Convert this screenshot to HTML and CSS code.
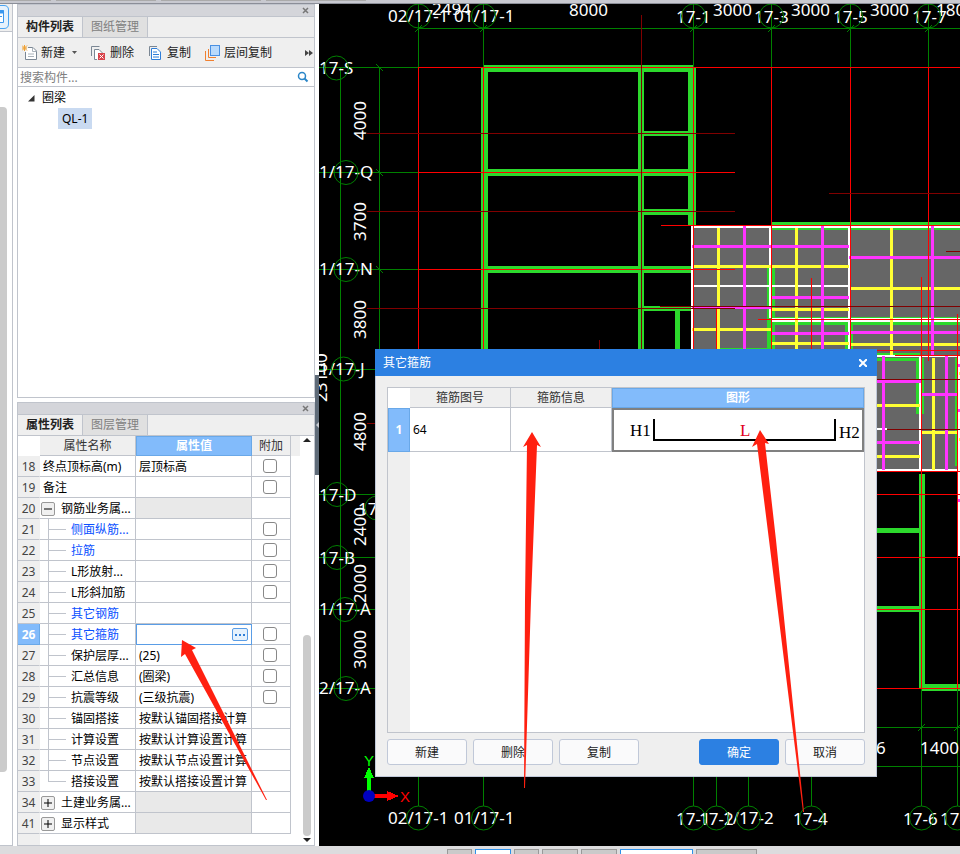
FILE: index.html
```html
<!DOCTYPE html>
<html lang="zh-CN">
<head>
    <meta charset="UTF-8">
    <meta name="viewport" content="width=device-width, initial-scale=1.0">
    <title>其它箍筋</title>
    <link rel="stylesheet" href="styles.css">
</head>
<body>
    <div class="top-strip"><span class="short"></span><span></span><span></span><span></span></div>

    <div class="workspace">
        <aside class="rail">
            <div class="rail-head">
                <button type="button" class="rail-button" aria-label="导航">
                    <svg width="9" height="24" viewBox="0 5 9 24">
                        <path d="M0 5.500H4Q8.500 5.500 8.500 10V24Q8.500 28.500 4 28.500H0" fill="#e6f2fd" stroke="#4aa3f0"/>
                        <path d="M0 10.500H3.500V22.500H0M0 16.500H2" fill="#fff" stroke="#3a97ee"/>
                        <path d="M0 12H4" stroke="#3a97ee" stroke-width="3"/>
                    </svg>
                </button>
            </div>
            <div class="rail-scroll"></div>
        </aside>

        <div class="panels">
            <section class="panel panel-list">
                <div class="panel-title"><button type="button" class="close" aria-label="关闭"><svg width="7" height="7"><path d="M1 1L6 6M6 1L1 6" stroke="#777" stroke-width="1.500"/></svg></button></div>
                <div class="tabs">
                    <button type="button" class="tab active">构件列表</button>
                    <button type="button" class="tab">图纸管理</button>
                </div>
                <div class="toolbar">
                    <button type="button" class="tool">
                        <svg width="16" height="16" viewBox="0 0 16 16">
                            <path d="M6 2.500H11L14.500 6V14.500H3.500V7" fill="#fff" stroke="#7b8794"/>
                            <path d="M10.500 2.500V6.500H14.500M6 9H12M6 11.500H12" fill="none" stroke="#aab2ba"/>
                            <path d="M0 .500L5 5.500M5 .500L0 5.500M2.500 0V6M0 3H5" stroke="#f0a030"/>
                        </svg>
                        新建
                        <svg class="caret" width="5" height="3"><path d="M0 0H5L2.500 3Z" fill="#555"/></svg>
                    </button>
                    <button type="button" class="tool">
                        <svg width="16" height="16" viewBox="0 0 16 16">
                            <path d="M.500 11V1.500H8.500" fill="none" stroke="#7b8794"/>
                            <path d="M6 14.500H3.500V4.500H8L11.500 8" fill="#fff" stroke="#7b8794"/>
                            <rect x="7" y="8" width="7" height="7" fill="#d9434b"/>
                            <path d="M8.500 9.500L12.500 13.500M12.500 9.500L8.500 13.500" stroke="#fff"/>
                        </svg>
                        删除
                    </button>
                    <button type="button" class="tool">
                        <svg width="16" height="16" viewBox="0 0 16 16">
                            <path d="M1.500 11V1.500H9" fill="none" stroke="#7b8794"/>
                            <path d="M3.500 3.500H9L12.500 7V14.500H3.500Z" fill="#fff" stroke="#2f7ed8"/>
                            <path d="M5 7H9M5 9.500H11M5 12H11" stroke="#2f7ed8"/>
                        </svg>
                        复制
                    </button>
                    <button type="button" class="tool">
                        <svg width="16" height="16" viewBox="0 0 16 16">
                            <path d="M.500 6V15.500H9M3.500 4V12.500H11" fill="none" stroke="#f08030"/>
                            <rect x="5.500" y=".500" width="9" height="10" fill="#b9dafc" stroke="#4a90e2"/>
                        </svg>
                        层间复制
                    </button>
                    <button type="button" class="more" aria-label="更多"><svg width="8" height="6"><path d="M0 0L4 3L0 6ZM4 0L8 3L4 6Z" fill="#444"/></svg></button>
                </div>
                <div class="search">
                    <input type="text" placeholder="搜索构件..." aria-label="搜索构件">
                    <svg width="12" height="12"><circle cx="5" cy="5" r="3.500" fill="none" stroke="#2a86c8" stroke-width="1.500"/><path d="M7.500 7.500L10.500 10.500" stroke="#2a86c8" stroke-width="2"/></svg>
                </div>
                <ul class="tree">
                    <li><svg width="7" height="7"><path d="M6.500 0V6.500H0Z" fill="#333"/></svg>圈梁
                        <ul><li><span class="picked">QL-1</span></li></ul>
                    </li>
                </ul>
            </section>

            <section class="panel panel-props">
                <div class="panel-title"><button type="button" class="close" aria-label="关闭"><svg width="7" height="7"><path d="M1 1L6 6M6 1L1 6" stroke="#777" stroke-width="1.500"/></svg></button></div>
                <div class="tabs">
                    <button type="button" class="tab active">属性列表</button>
                    <button type="button" class="tab">图层管理</button>
                </div>
                <div class="grid-wrap">
                    <div class="grid-main">
                        <table class="props">
                            <colgroup><col class="c-num"><col class="c-name"><col class="c-value"><col class="c-add"><col></colgroup>
                            <thead>
                                <tr><td class="corner"></td><th>属性名称</th><th class="current">属性值</th><th>附加</th><td class="filler"></td></tr>
                            </thead>
                            <tbody>
                                <tr><th>18</th><td>终点顶标高(m)</td><td>层顶标高</td><td class="add"><input type="checkbox" aria-label="终点顶标高附加"></td></tr>
                                <tr><th>19</th><td>备注</td><td></td><td class="add"><input type="checkbox" aria-label="备注附加"></td></tr>
                                <tr><th>20</th><td class="group"><button type="button" class="toggle" aria-label="收起"><svg width="8" height="8"><path d="M0 4H8" stroke="#000"/></svg></button>钢筋业务属...</td><td class="gray"></td><td></td></tr>
                                <tr><th>21</th><td class="leaf blue">侧面纵筋...</td><td></td><td class="add"><input type="checkbox" aria-label="侧面纵筋附加"></td></tr>
                                <tr><th>22</th><td class="leaf blue">拉筋</td><td></td><td class="add"><input type="checkbox" aria-label="拉筋附加"></td></tr>
                                <tr><th>23</th><td class="leaf">L形放射...</td><td></td><td class="add"><input type="checkbox" aria-label="L形放射附加"></td></tr>
                                <tr><th>24</th><td class="leaf">L形斜加筋</td><td></td><td class="add"><input type="checkbox" aria-label="L形斜加筋附加"></td></tr>
                                <tr><th>25</th><td class="leaf blue">其它钢筋</td><td></td><td></td></tr>
                                <tr class="selected"><th>26</th><td class="leaf blue">其它箍筋</td><td class="editing"><div class="editor"><input type="text" aria-label="其它箍筋"><button type="button" aria-label="选择"><svg width="10" height="2"><path d="M0 1H2M4 1H6M8 1H10" stroke="#2f7ed8" stroke-width="2"/></svg></button></div></td><td class="add"><input type="checkbox" aria-label="其它箍筋附加"></td></tr>
                                <tr><th>27</th><td class="leaf">保护层厚...</td><td>(25)</td><td class="add"><input type="checkbox" aria-label="保护层厚附加"></td></tr>
                                <tr><th>28</th><td class="leaf">汇总信息</td><td>(圈梁)</td><td class="add"><input type="checkbox" aria-label="汇总信息附加"></td></tr>
                                <tr><th>29</th><td class="leaf">抗震等级</td><td>(三级抗震)</td><td class="add"><input type="checkbox" aria-label="抗震等级附加"></td></tr>
                                <tr><th>30</th><td class="leaf">锚固搭接</td><td>按默认锚固搭接计算</td><td></td></tr>
                                <tr><th>31</th><td class="leaf">计算设置</td><td>按默认计算设置计算</td><td></td></tr>
                                <tr><th>32</th><td class="leaf">节点设置</td><td>按默认节点设置计算</td><td></td></tr>
                                <tr><th>33</th><td class="leaf last">搭接设置</td><td>按默认搭接设置计算</td><td></td></tr>
                                <tr><th>34</th><td class="group"><button type="button" class="toggle" aria-label="展开"><svg width="8" height="8"><path d="M0 4H8M4 0V8" stroke="#000"/></svg></button>土建业务属...</td><td class="gray"></td><td></td></tr>
                                <tr><th>41</th><td class="group"><button type="button" class="toggle" aria-label="展开"><svg width="8" height="8"><path d="M0 4H8M4 0V8" stroke="#000"/></svg></button>显示样式</td><td class="gray"></td><td></td></tr>
                            </tbody>
                        </table>
                    </div>
                    <div class="scrollbar">
                        <svg width="8" height="4"><path d="M0 4L4 0L8 4Z" fill="#222"/></svg>
                        <div class="thumb"></div>
                        <svg width="8" height="4"><path d="M0 0H8L4 4Z" fill="#222"/></svg>
                    </div>
                </div>
            </section>
        </div>

        <div class="splitter"><div class="handle"><svg width="4" height="6"><path d="M4 0V6L1 3Z" fill="#c8ccd2"/></svg></div></div>

        <main class="drawing">
            <svg viewBox="319 4 641 842" preserveAspectRatio="xMinYMin slice">
                <!-- slabs -->
                <path class="slab" d="M692 226H960V356H692ZM870 356H957V470H870Z"/>
                <path class="slab white" d="M958 356H960V556H958Z"/>

                <!-- beams -->
                <g class="beam">
                    <path d="M483 65H693V72H483ZM481 67H488V360H481ZM638 67H644V360H638ZM481 169H693V176H481ZM481 266H692V273H481ZM638 131H693V136H638ZM638 209H693V215H638ZM688 67H696V225H688ZM640 306H692V311H640ZM675 311H680V360H675Z"/>
                    <path d="M771 222H960V225H771ZM771 227H960V230H771ZM767 267H775V349H767ZM771 317H960V325H771ZM845 325H853V349H845ZM719 348H770V350H719Z"/>
                    <path d="M870 353H920V355H870ZM870 358H919V361H870ZM916 358H924V414H916ZM955 358H957V466H955Z"/>
                    <path d="M919 474H925V688H919ZM870 528H919V533H870ZM870 606H920V612H870ZM921 684H960V691H921Z"/>
                </g>

                <!-- slab edges -->
                <path class="edge" d="M692 226V360M770 226V318M849 226V349M692 286H849M870 356H958M920 356V470M870 429H887M870 470H958M692 227H960"/>
                <path class="edge thick" d="M771 320H960"/>

                <!-- slab rebar -->
                <path class="bar yellow" d="M718.500 228V349M796.500 228V349M891.500 228V355M693 266.500H849M850 288.500H960M692 329.500H771M771 309.500H849M771 343.500H849M850 344.500H960M870 405.500H920M870 456.500H920M921 432.500H957M933.500 358V470M959 373H960M959 439H960"/>
                <path class="bar magenta" d="M744.500 226V349M822.500 226V349M932.500 226V356M692 246.500H849M849 257.500H960M771 297.500H849M692 307.500H771M771 333.500H849M850 332.500H960M883.500 356V470M946.500 356V470M870 381.500H921M921 394.500H957M870 442.500H920M958 365H960M958 410H960M958 500H960"/>

                <!-- axis lines -->
                <path class="axis" d="M418 28.500H960M418.500 4V67M483.500 4V67M693.500 4V67M771.500 4V67M850.500 4V67M928.500 4V67M319 67.500H418M319 172.500H418M319 269.500H418M319 369.500H380M319 494.500H380M319 557.500H380M319 609.500H380M319 688.500H380M340.500 67V688M379.500 67V360"/>
                <path class="axis" d="M418.500 770V806M483.500 770V806M693.500 770V806M716.500 770V806M748.500 770V806M811.500 770V806M921.500 689V806M957.500 689V806M870 727.500H960M870 766.500H960"/>
                <path class="axis" d="M415 32L422 25M480 32L487 25M690 32L697 25M768 32L775 25M847 32L854 25M925 32L932 25M376 64L383 71M376 169L383 176M376 266L383 273M918 731L925 724M954 731L960 725"/>
                <path class="red" d="M418.500 67V360M418 67.500H960M418 172.500H735M418 269.500H735M483.500 67V360M693.500 67V360M771.500 67V360M850.500 67V360M928.500 67V361M661 225.500H960M758 319.500H960M870 350.500H960M895 355.500H960M716.500 309V349M870 471.500H960M870 494.500H960M870 557.500H960M870 609.500H960M870 688.500H960M921.500 277V688M957.500 314V688M811.500 278V349"/>
                <path class="dark-red" d="M367 133.500H735M367 211.500H735M367 308.500H735M660 306.500H960M829 193.500H960M946 251.500H960M641.500 15V360M599.500 340V360M367 423.500H380M870 379.500H960M887 429.500H960"/>

                <!-- axis labels -->
                <g class="label">
                    <text x="388" y="22">02/17-1</text>
                    <text x="432" y="15">2494</text>
                    <text x="454" y="22">01/17-1</text>
                    <text x="569" y="16">8000</text>
                    <text x="676" y="23">17-1</text>
                    <text x="713" y="16">3000</text>
                    <text x="754" y="23">17-3</text>
                    <text x="791" y="16">3000</text>
                    <text x="833" y="23">17-5</text>
                    <text x="870" y="16">3000</text>
                    <text x="912" y="23">17-7</text>
                    <text x="936" y="16">1800</text>
                    <text x="319" y="74">17-S</text>
                    <text x="319" y="178">1/17-Q</text>
                    <text x="319" y="275">1/17-N</text>
                    <text x="319" y="375">1/17-J</text>
                    <text x="319" y="501">17-D</text>
                    <text x="358" y="515">17</text>
                    <text x="319" y="564">17-B</text>
                    <text x="319" y="615">1/17-A</text>
                    <text x="319" y="694">2/17-A</text>
                    <text transform="translate(366 140) rotate(-90)">4000</text>
                    <text transform="translate(366 241) rotate(-90)">3700</text>
                    <text transform="translate(366 339) rotate(-90)">3800</text>
                    <text transform="translate(366 451) rotate(-90)">4800</text>
                    <text transform="translate(366 546) rotate(-90)">2400</text>
                    <text transform="translate(366 603) rotate(-90)">2000</text>
                    <text transform="translate(366 669) rotate(-90)">3000</text>
                    <text transform="translate(327 402) rotate(-90)">23100</text>
                    <text x="388" y="824">02/17-1</text>
                    <text x="454" y="824">01/17-1</text>
                    <text x="676" y="825">17-1</text>
                    <text x="699" y="825">17-2</text>
                    <text x="723" y="824">1/17-2</text>
                    <text x="793" y="825">17-4</text>
                    <text x="903" y="825">17-6</text>
                    <text x="940" y="825">17-7</text>
                    <text x="876" y="754">6</text>
                    <text x="920" y="754">1400</text>
                </g>
                <g class="bubble">
                    <circle cx="418.500" cy="16" r="12"/><circle cx="483.500" cy="16" r="12"/><circle cx="693.500" cy="16" r="12"/>
                    <circle cx="771.500" cy="16" r="12"/><circle cx="850.500" cy="16" r="12"/><circle cx="928.500" cy="16" r="12"/>
                    <circle cx="336.500" cy="68" r="12"/><circle cx="346" cy="172.500" r="12"/><circle cx="346" cy="269.500" r="12"/>
                    <circle cx="343.500" cy="369" r="12"/><circle cx="337" cy="494.500" r="12"/><circle cx="377" cy="508" r="12"/>
                    <circle cx="337" cy="557.500" r="12"/><circle cx="345" cy="609.500" r="12"/><circle cx="346" cy="688.500" r="12"/>
                    <circle cx="418.500" cy="818" r="12"/><circle cx="483.500" cy="818" r="12"/><circle cx="693.500" cy="818" r="12"/>
                    <circle cx="716.500" cy="818" r="12"/><circle cx="748.500" cy="818" r="12"/><circle cx="811.500" cy="818" r="12"/>
                    <circle cx="921.500" cy="818" r="12"/><circle cx="957.500" cy="818" r="12"/>
                </g>

                <!-- coordinate marker -->
                <path d="M367 792V778H364L369 767L374 778H371V792Z" fill="#0f0"/>
                <path d="M372 794H387V791L399 796L387 801V798H372Z" fill="#f00"/>
                <circle cx="369" cy="796" r="6" fill="#0000c0"/>
                <text class="mark" x="364" y="766" fill="#0f0">Y</text>
                <text class="mark" x="400" y="802" fill="#f00">X</text>
            </svg>
        </main>
    </div>

    <footer class="status-bar">
        <button type="button" class="w25" aria-label="捕捉"></button>
        <button type="button" class="w36 on" aria-label="正交"></button>
        <button type="button" class="w25" aria-label="交点"></button>
        <button type="button" class="w36" aria-label="垂点"></button>
        <button type="button" class="w36" aria-label="中点"></button>
        <button type="button" class="w73 on" aria-label="偏移"></button>
        <button type="button" class="w61" aria-label="旋转"></button>
    </footer>

    <div class="dialog" role="dialog" aria-label="其它箍筋">
        <div class="dialog-title">
            <span>其它箍筋</span>
            <button type="button" class="close" aria-label="关闭"><svg width="8" height="8"><path d="M0 0L8 8M8 0L0 8" stroke="#fff" stroke-width="2"/></svg></button>
        </div>
        <div class="dialog-body">
            <div class="stirrups-wrap">
                <table class="stirrups">
                    <colgroup><col class="c-num"><col class="c-code"><col class="c-code"><col></colgroup>
                    <thead>
                        <tr><td></td><th>箍筋图号</th><th>箍筋信息</th><th class="current">图形</th></tr>
                    </thead>
                    <tbody>
                        <tr>
                            <th>1</th><td>64</td><td></td>
                            <td class="shape">
                                <svg width="248" height="40" viewBox="614 410 248 40">
                                    <path d="M654 419V440H835V419" fill="none" stroke="#000" stroke-width="2"/>
                                    <text x="630" y="436">H1</text>
                                    <text x="740" y="436" class="len">L</text>
                                    <text x="839" y="438">H2</text>
                                </svg>
                            </td>
                        </tr>
                    </tbody>
                </table>
            </div>
            <div class="actions">
                <button type="button">新建</button>
                <button type="button">删除</button>
                <button type="button">复制</button>
                <button type="button" class="primary">确定</button>
                <button type="button">取消</button>
            </div>
        </div>
    </div>

    <svg class="arrows" width="960" height="854">
        <path d="M182 640L196 648L192 650L267 800L266 800L185 654L181 657Z"/>
        <path d="M532 432L541 447L537 445L531 600L525 788H524L525 600L527 445L523 447Z"/>
        <path d="M760 430L769 444L765 443L776 540L804 812H803L769 540L757 444L752 447Z"/>
    </svg>
</body>
</html>
```

FILE: styles.css
```css
* { box-sizing: border-box; }
body {
    margin: 0;
    min-height: 100vh;
    display: flex;
    flex-direction: column;
    position: relative;
    overflow: hidden;
    font-family: "Noto Sans", "Noto Sans CJK SC", sans-serif;
    font-size: 12px;
    line-height: 18px;
    color: #000;
    background-color: #fff;
}
button, input { font: inherit; color: inherit; }
button {
    padding: 0;
    border: none;
    background: none;
    cursor: pointer;
}
svg { display: block; }
table {
    table-layout: fixed;
    border-collapse: separate;
    border-spacing: 0;
}
th { font-weight: normal; }

/* window edges */
.top-strip {
    display: flex;
    gap: 5px;
    height: 4px;
    background-color: #c8c9d0;
    border-bottom: 1px solid #8b8e98;
}
.top-strip span {
    width: 100px;
    height: 1px;
    background-color: #aaa;
}
.top-strip .short { width: 51px; }
.status-bar {
    display: flex;
    gap: 3px;
    height: 8px;
    padding: 3px 0 0 447px;
    overflow: hidden;
    background-color: #dcdcde;
}
.status-bar button {
    height: 20px;
    background-color: #cacaca;
    border: 1px solid #999;
}
.status-bar .on { background-color: #fff; border-color: #2c90ea; }
.status-bar .w25 { width: 25px; }
.status-bar .w36 { width: 36px; }
.status-bar .w61 { width: 61px; }
.status-bar .w73 { width: 73px; }

.workspace { flex: 1; display: flex; }

/* left rail */
.rail {
    width: 13px;
    margin-right: 4px;
    border-right: 1px solid #c0c4cc;
    border-bottom: 1px solid #c0c4cc;
}
.rail-head {
    height: 28px;
    padding-top: 1px;
    background-color: #efefef;
    border-bottom: 1px solid #c0c4cc;
}
.rail-button { display: block; }
.rail-scroll {
    width: 7px;
    height: 665px;
    margin-top: 75px;
    background-color: #cbcbcb;
    border-radius: 0 4px 4px 0;
}

/* docked panels */
.panels {
    width: 298px;
    display: flex;
    flex-direction: column;
    gap: 4px;
}
.panel {
    display: flex;
    flex-direction: column;
    border: 1px solid #c0c4cc;
}
.panel-list { flex: 1; }
.panel-props { height: 444px; }
.panel-title {
    display: flex;
    justify-content: flex-end;
    align-items: center;
    height: 11px;
    padding-right: 5px;
    background-color: #d4d5da;
}
.tabs {
    display: flex;
    height: 22px;
    background-color: #efefef;
    border-top: 1px solid #c0c4cc;
    border-bottom: 1px solid #c0c4cc;
}
.tab {
    width: 65px;
    color: #808080;
    background-color: #e0e0e0;
    border-right: 1px solid #c0c4cc;
}
.tab.active {
    color: #222;
    font-weight: bold;
    background-color: #efefef;
}
.toolbar {
    display: flex;
    align-items: center;
    gap: 14px;
    height: 30px;
    padding: 0 1px 0 4px;
    background-color: #efefef;
    border-bottom: 1px solid #c0c4cc;
}
.tool {
    display: flex;
    align-items: center;
    gap: 3px;
    color: #222;
    white-space: nowrap;
}
.tool .caret { margin-left: 4px; }
.more { margin-left: auto; }
.search {
    display: flex;
    align-items: center;
    height: 19px;
    padding-right: 5px;
    border-bottom: 1px solid #c0c4cc;
}
.search input {
    flex: 1;
    min-width: 0;
    height: 18px;
    padding: 1px 2px 0;
    border: none;
    outline: none;
}
.search input::placeholder { color: #808080; }
.tree, .tree ul {
    margin: 0;
    padding: 0;
    list-style: none;
    line-height: 21px;
}
.tree { padding-left: 10px; }
.tree svg { display: inline-block; margin-right: 7px; }
.tree ul { padding-left: 30px; }
.picked {
    display: inline-block;
    padding: 0 4px;
    background-color: #c9daf1;
}

/* property grid */
.grid-wrap { flex: 1; display: flex; }
.grid-main {
    width: 282px;
    background: linear-gradient(to right, #efefef 22px, #fff 22px);
}
.props { width: 282px; }
.c-num { width: 22px; }
.c-name { width: 96px; }
.c-value { width: 116px; }
.c-add { width: 39px; }
.props th, .props td {
    height: 21px;
    padding: 2px 0 0 3px;
    text-align: left;
    white-space: nowrap;
    border-right: 1px solid #c0c4cc;
    border-bottom: 1px solid #c0c4cc;
}
.props thead th, .props thead td {
    height: 20px;
    padding: 1px 0 0;
    text-align: center;
    color: #333;
    background-color: #efefef;
}
.props thead .corner { background-color: #fff; border: none; }
.props thead .filler { border: none; }
.props thead .current, .stirrups thead .current {
    padding: 0;
    color: #fff;
    font-weight: bold;
    background-color: #82bbfb;
    border: 1px solid #69a8e8;
}
.props tbody th {
    padding: 2px 0 0;
    text-align: center;
    color: #444;
    background-color: #efefef;
    border-right-color: #efefef;
}
.props .gray { background-color: #e9e9e9; }
.props .blue { color: #0a50ff; }
.props .leaf {
    padding-left: 31px;
    background-image: linear-gradient(#c0c4cc, #c0c4cc), linear-gradient(#c0c4cc, #c0c4cc);
    background-repeat: no-repeat;
    background-size: 1px 100%, 18px 1px;
    background-position: 8px 0, 8px 10px;
}
.props .last { background-size: 1px 10px, 18px 1px; }
.props .group { padding-left: 1px; }
.toggle {
    display: inline-flex;
    align-items: center;
    justify-content: center;
    width: 14px;
    height: 14px;
    margin: -2px 6px 0 0;
    vertical-align: middle;
    background-color: #f0f0f0;
    border: 1px solid #999;
    border-radius: 2px;
}
.props .add { padding: 0 2px 0 0; text-align: center; }
.add input {
    appearance: none;
    display: block;
    width: 14px;
    height: 14px;
    margin: 0 auto;
    background-color: #fff;
    border: 1px solid #888;
    border-radius: 3px;
}
.props .selected th {
    color: #fff;
    font-weight: bold;
    background-color: #82bbfb;
    border-color: #69a8e8;
}
.props .editing { padding: 0; border-color: #5a9de6; }
.editor {
    display: flex;
    align-items: center;
    height: 20px;
    padding-right: 3px;
    border-top: 1px solid #5a9de6;
    border-left: 1px solid #5a9de6;
}
.editor input {
    flex: 1;
    min-width: 0;
    height: 16px;
    border: none;
    outline: none;
}
.editor button {
    width: 16px;
    height: 13px;
    padding: 0 2px;
    background-color: #e6f2fd;
    border: 1px solid #5a9de6;
    border-radius: 2px;
}
.scrollbar {
    flex: 1;
    display: flex;
    flex-direction: column;
    align-items: center;
    padding: 2px 0 3px;
}
.thumb {
    width: 8px;
    height: 201px;
    margin: auto 0 2px;
    background-color: #cbcbcb;
    border-radius: 4px;
}

.splitter {
    display: flex;
    align-items: center;
    width: 4px;
}
.handle {
    display: flex;
    align-items: center;
    width: 4px;
    height: 100px;
    background-color: #5f6b78;
}

/* drawing */
.drawing {
    flex: 1;
    min-width: 0;
    position: relative;
    overflow: hidden;
    background-color: #000;
}
.drawing svg {
    position: absolute;
    inset: 0;
    width: 100%;
    height: 100%;
}
.drawing path { shape-rendering: crispEdges; }
.slab { fill: #666; }
.slab.white { fill: #fff; }
.beam { fill: #2cd92c; }
.edge, .bar, .axis, .red, .dark-red { fill: none; }
.edge { stroke: #fff; stroke-width: 2; }
.edge.thick { stroke-width: 4; }
.bar { stroke-width: 3; }
.yellow { stroke: #ff3; }
.magenta { stroke: #f3f; }
.axis { stroke: #008000; }
.red { stroke: #f00; }
.dark-red { stroke: #800000; }
.bubble { fill: none; stroke: #008000; }
.label { font-size: 17px; fill: #fff; }
.mark { font-family: "Liberation Sans", sans-serif; font-size: 15px; }

/* stirrup dialog */
.dialog {
    position: absolute;
    top: 349px;
    left: 375px;
    width: 502px;
    background-color: #efefef;
}
.dialog-title {
    display: flex;
    align-items: center;
    justify-content: space-between;
    height: 27px;
    padding: 0 10px 0 8px;
    color: #fff;
    background-color: #2c80e2;
}
.dialog-body {
    padding: 11px 11px;
    border: 1px solid #c0c8d8;
    border-top: none;
}
.stirrups-wrap {
    height: 346px;
    border: 1px solid #c0c4cc;
    background: linear-gradient(to right, #efefef 22px, #fff 22px);
}
.stirrups { width: 100%; }
.c-code { width: 101px; }
.stirrups th, .stirrups td {
    height: 44px;
    padding: 0 0 0 3px;
    border-right: 1px solid #c0c4cc;
    border-bottom: 1px solid #c0c4cc;
}
.stirrups thead th, .stirrups thead td {
    height: 20px;
    padding: 1px 0 0;
    color: #333;
    background-color: #efefef;
}
.stirrups thead td { background-color: #fff; border: none; }
.stirrups thead .current { padding: 0; color: #fff; background-color: #82bbfb; }
.stirrups tbody th {
    padding: 0;
    color: #fff;
    font-weight: bold;
    background-color: #82bbfb;
    border: 1px solid #69a8e8;
}
.stirrups .shape { padding: 0; border: 2px solid #808080; }
.shape text { font-family: "Liberation Serif", serif; font-size: 17px; }
.shape .len { fill: #e00020; }
.actions {
    display: flex;
    gap: 6px;
    margin-top: 6px;
}
.actions button {
    width: 80px;
    height: 26px;
    padding-top: 1px;
    color: #222;
    background-color: #fafafb;
    border: 1px solid #c0c8d8;
    border-radius: 3px;
}
.actions .primary {
    margin-left: auto;
    color: #fff;
    background-color: #2c80e2;
    border-color: #2c80e2;
}

/* callout arrows */
.arrows {
    position: absolute;
    top: 0;
    left: 0;
    fill: #ff2010;
    pointer-events: none;
}
```
